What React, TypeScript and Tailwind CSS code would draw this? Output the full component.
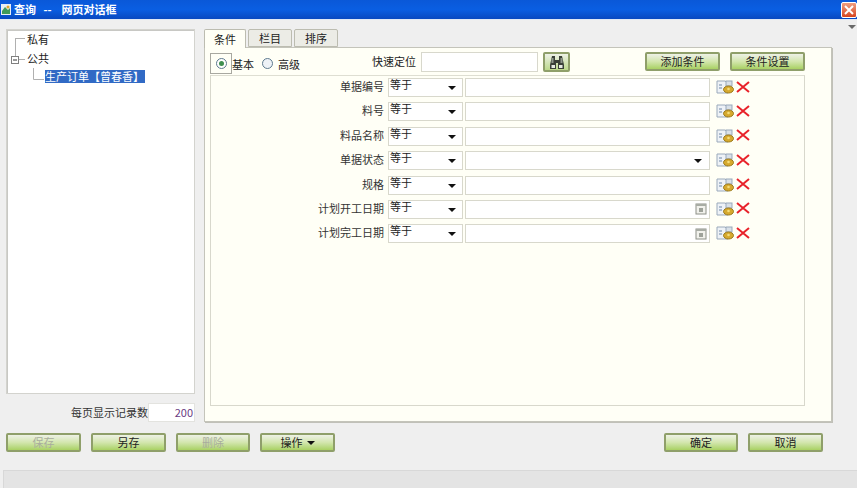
import React from 'react'

const rows = [
  { label: '单据编号', kind: 'text' },
  { label: '料号', kind: 'text' },
  { label: '料品名称', kind: 'text' },
  { label: '单据状态', kind: 'select' },
  { label: '规格', kind: 'text' },
  { label: '计划开工日期', kind: 'date' },
  { label: '计划完工日期', kind: 'date' },
]

function Caret({ className = '' }: { className?: string }) {
  return (
    <svg width="8" height="4" viewBox="0 0 8 4" className={className}>
      <path d="M0 0h8L4 4z" fill="#111" />
    </svg>
  )
}

function GreenButton({ label, disabled, caret, className = 'w-[75px]' }: { label: string; disabled?: boolean; caret?: boolean; className?: string }) {
  return (
    <button className={`h-[19px] shrink-0 flex items-center justify-center gap-1 rounded-[2px] border-2 border-[#8f9f6a] bg-gradient-to-b from-[#eef1e6] via-[#d3e6ad] to-[#a9d162] text-[11px] leading-none whitespace-nowrap ${disabled ? 'text-[#a9ad9e]' : 'text-[#222]'} ${className}`}>
      {label}
      {caret && <Caret />}
    </button>
  )
}

function QueryIcon() {
  return (
    <svg width="18" height="15" viewBox="0 0 18 15">
      <path d="M1 2h8l3 3v9H1z" fill="#eef2f7" stroke="#9aa9bb" />
      <path d="M3 6h3M3 9h3" stroke="#6d86a8" />
      <rect x="10" y="2" width="6" height="5" fill="#d8e0e8" stroke="#9aa9bb" />
      <ellipse cx="12.5" cy="10.5" rx="5" ry="3.5" fill="#d6a92e" stroke="#9b7a1c" />
      <circle cx="12.5" cy="10" r="1.3" fill="#f4dc7a" />
    </svg>
  )
}

function DeleteIcon() {
  return (
    <svg width="14" height="12" viewBox="0 0 14 12">
      <path d="M1 1l12 10M13 1L1 11" stroke="#e8222a" strokeWidth="2" />
    </svg>
  )
}

function CalendarIcon() {
  return (
    <svg width="12" height="12" viewBox="0 0 12 12">
      <rect x="1" y="1" width="10" height="10" fill="#f1f1ec" stroke="#8d9088" />
      <rect x="1" y="1" width="10" height="2" fill="#a8aca4" />
      <rect x="4" y="5" width="4" height="4" fill="#9ea29a" />
    </svg>
  )
}

function Binoculars() {
  return (
    <svg width="16" height="15" viewBox="0 0 16 15">
      <path d="M3 1h3v4h4V1h3l2 9v4H9V8H7v6H1v-4z" fill="#3a4038" />
      <rect x="2.5" y="3" width="2" height="5" fill="#8f978c" />
      <rect x="11.5" y="3" width="2" height="5" fill="#8f978c" />
      <rect x="2.5" y="10" width="3.5" height="3" fill="#e6ebe3" />
      <rect x="10" y="10" width="3.5" height="3" fill="#e6ebe3" />
    </svg>
  )
}

function TreeLines() {
  return (
    <svg width="42" height="58" viewBox="0 0 42 58" className="shrink-0">
      <path d="M8.5 8V26M8.5 8.5H18M11.5 29.5H18M26.5 38V49.5H37" stroke="#b0b0b0" fill="none" />
      <rect x="4.5" y="26.5" width="7" height="7" fill="#fff" stroke="#808080" />
      <path d="M6 30h4" stroke="#333" />
    </svg>
  )
}

export default function App() {
  return (
    <div className="w-[857px] h-[488px] overflow-hidden flex flex-col bg-[#efefef] text-[11px] text-[#222] font-['Noto_Sans_CJK_SC','Liberation_Sans',sans-serif]">
      {/* title bar */}
      <div className="h-[20px] shrink-0 flex items-center justify-between border-b border-[#dfe8f5] bg-gradient-to-b from-[#0a58d8] via-[#0a5ee2] to-[#0848c0]">
        <div className="flex items-center gap-[2px]">
          <svg width="12" height="13" viewBox="0 0 12 13">
            <rect x="1" y="1" width="10" height="11" fill="#e8eef4" />
            <path d="M2 8l3-4 3 3 2-2v6H2z" fill="#3f9a5a" />
            <circle cx="8" cy="4" r="1.5" fill="#e0a52c" />
          </svg>
          <span className="text-white font-bold text-[11px] leading-none whitespace-pre">查询   --    网页对话框</span>
        </div>
        <div className="w-[16px] h-[16px] flex items-center justify-center border border-white rounded-[2px] bg-gradient-to-b from-[#ee9d80] to-[#d5431c]">
          <svg width="10" height="10" viewBox="0 0 10 10">
            <path d="M1 1l8 8M9 1L1 9" stroke="#fff" strokeWidth="2" />
          </svg>
        </div>
      </div>

      {/* small menu arrow */}
      <div className="h-[9px] shrink-0 flex justify-end items-end pr-[1px]">
        <Caret className="opacity-60" />
      </div>

      {/* body */}
      <div className="flex-1 min-h-0 pl-[6px] flex flex-col">
        <div className="flex gap-[9px] h-[393px]">
          {/* left column */}
          <div className="w-[189px] flex flex-col">
            <div className="h-[367px] bg-white border border-[#d3d3ce] shadow-[inset_1px_1px_0_#c8c8c4] flex">
              <div className="flex">
                <TreeLines />
                <div className="-ml-[22px] flex flex-col text-[#222] leading-[19px]">
                  <span className="h-[19px]">私有</span>
                  <span className="h-[21px]">公共</span>
                  <span className="ml-[18px] h-[13px] leading-[13px] w-[100px] bg-[#316ac5] text-white whitespace-nowrap">生产订单【曾春香】</span>
                </div>
              </div>
            </div>
            <div className="flex justify-end items-center mt-[9px] h-[19px]">
              <span className="text-[#333] whitespace-nowrap">每页显示记录数</span>
              <div className="w-[47px] h-[19px] bg-white border border-[#e3e3df] text-right pr-[1px] leading-[17px] text-[#6a3a82]">200</div>
            </div>
          </div>

          {/* right column */}
          <div className="w-[628px] flex flex-col">
            <div className="flex gap-[2px] h-[18px] relative z-10">
              <div className="w-[42px] h-[19px] bg-[#fffff6] border border-b-0 border-[#bcbcb0] rounded-t-[2px] text-center leading-[18px]">条件</div>
              <div className="w-[44px] h-[18px] bg-[#ecece6] border border-[#bcbcb0] rounded-t-[2px] text-center leading-[17px]">栏目</div>
              <div className="w-[44px] h-[18px] bg-[#ecece6] border border-[#bcbcb0] rounded-t-[2px] text-center leading-[17px]">排序</div>
            </div>
            <div className="h-[375px] bg-[#fffff6] border border-[#c4c4ba] shadow-[1px_1px_0_#c0c0b8] pl-[5px] flex flex-col">
              {/* toolbar */}
              <div className="h-[27px] shrink-0 w-[595px] flex items-start pt-[5px] whitespace-nowrap">
                <div className="w-[22px] h-[21px] border border-[#a8a8a0] flex items-center justify-center shrink-0">
                  <span className="w-[11px] h-[11px] rounded-full border border-[#5e7a8e] bg-white flex items-center justify-center">
                    <span className="w-[5px] h-[5px] rounded-full bg-[#3f8f4f]" />
                  </span>
                </div>
                <span className="mt-[3px] leading-[17px] shrink-0">基本</span>
                <span className="w-[11px] h-[11px] rounded-full border border-[#5e7a8e] bg-[#eef2f6] ml-[8px] mt-[5px] shrink-0" />
                <span className="ml-[5px] mt-[3px] leading-[17px] shrink-0">高级</span>
                <span className="ml-[72px] leading-[17px] shrink-0">快速定位</span>
                <div className="ml-[5px] mt-[-1px] w-[117px] h-[20px] bg-white border border-[#d8d8cc] shrink-0" />
                <button className="ml-[5px] mt-[-1px] w-[27px] h-[20px] rounded-[2px] border-2 border-[#8f9f6a] bg-gradient-to-b from-[#eef1e6] to-[#bcd98a] flex items-center justify-center shrink-0">
                  <Binoculars />
                </button>
                <div className="ml-[75px] mt-[-1px]"><GreenButton label="添加条件" /></div>
                <div className="ml-[10px] mt-[-1px]"><GreenButton label="条件设置" /></div>
              </div>

              {/* condition area */}
              <div className="w-[595px] h-[331px] border border-t-[#deded2] border-[#d8d8cc] flex flex-col pt-[2px]">
                {rows.map(r => (
                  <div key={r.label} className="h-[24.4px] shrink-0 flex items-start">
                    <span className="w-[173px] text-right leading-[16px] text-[#333] shrink-0">{r.label}</span>
                    <div className="ml-[4px] w-[75px] h-[19px] bg-white border border-[#d8d8cc] flex justify-between shrink-0 pl-[1px] pr-[6px]">
                      <span className="leading-[11px]">等于</span>
                      <Caret className="mt-[7px]" />
                    </div>
                    <div className="ml-[2px] w-[245px] h-[19px] bg-white border border-[#d8d8cc] flex items-center justify-end shrink-0 pr-[2px]">
                      {r.kind === 'select' && <Caret className="mr-[5px]" />}
                      {r.kind === 'date' && <CalendarIcon />}
                    </div>
                    <div className="ml-[6px] mt-[1px] flex items-center gap-[2px] shrink-0">
                      <QueryIcon />
                      <DeleteIcon />
                    </div>
                  </div>
                ))}
              </div>
            </div>
          </div>
        </div>

        {/* buttons */}
        <div className="flex items-center mt-[11px] w-[817px]">
          <GreenButton label="保存" disabled />
          <GreenButton label="另存" className="w-[75px] ml-[10px]" />
          <GreenButton label="删除" disabled className="w-[74px] ml-[10px]" />
          <GreenButton label="操作" caret className="w-[75px] ml-[10px]" />
          <GreenButton label="确定" className="w-[74px] ml-auto" />
          <GreenButton label="取消" className="w-[75px] ml-[10px]" />
        </div>
      </div>

      {/* status bar */}
      <div className="h-[18px] shrink-0 ml-[3px] bg-[#e4e4e4] border-t border-l border-[#d8d8d8]" />
    </div>
  )
}
